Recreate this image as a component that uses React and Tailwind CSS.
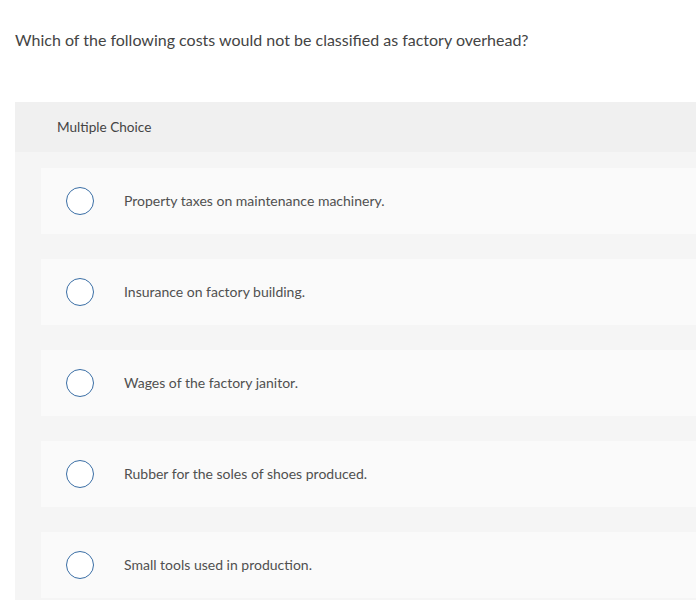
export default function App() {
  const options = [
    "Property taxes on maintenance machinery.",
    "Insurance on factory building.",
    "Wages of the factory janitor.",
    "Rubber for the soles of shoes produced.",
    "Small tools used in production.",
  ];
  return (
    <div className="w-[696px] h-[600px] overflow-hidden bg-white" style={{ fontFamily: "Lato, 'Open Sans', sans-serif" }}>
      <div className="pl-[15px] pt-[29px] h-[102px] text-[16px] leading-[22px] text-[#444]">
        Which of the following costs would not be classified as factory overhead?
      </div>
      <div className="ml-[15px] bg-[#f5f5f5] h-[498px]">
        <div className="h-[50px] bg-[#f0f0f0] flex items-center pl-[42px] text-[13.6px] text-[#444]">
          Multiple Choice
        </div>
        <div className="pl-[26px] pt-[16px] flex flex-col gap-[25px]">
          {options.map((o) => (
            <div key={o} className="h-[66px] bg-[#fafafa] flex items-center">
              <div className="ml-[25px] w-[28px] h-[28px] rounded-full border-[1.5px] border-[#3a6ea5] bg-white shrink-0" />
              <div className="ml-[30px] text-[14px] leading-[20px] text-[#505050]">{o}</div>
            </div>
          ))}
        </div>
      </div>
    </div>
  );
}
